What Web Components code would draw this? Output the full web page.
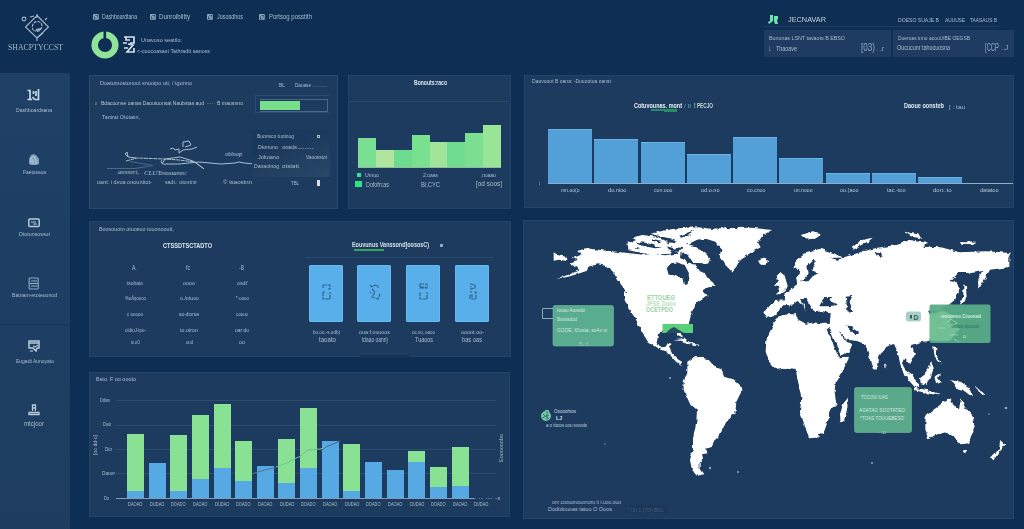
<!DOCTYPE html>
<html lang="en">
<head>
<meta charset="utf-8">
<title>Operations dashboard</title>
<style>
html,body{margin:0;height:529px;overflow:hidden;background:#0f2e53}
body{font-family:"Liberation Sans",Arial,sans-serif;color:#a9bed0}
</style>
</head>
<body>
<dash-app></dash-app>
<script>
/* Text squeezed to a given width, or spaced out when it is much shorter. */
class FitText extends HTMLElement{
  connectedCallback(){
    const w=+this.getAttribute('w'),s=+this.getAttribute('s')||6;
    this.attachShadow({mode:'open'}).innerHTML=`<style>
      :host{display:block;flex:none;width:${w}px;height:${s}px;font-size:${s}px;line-height:${s}px;white-space:nowrap}
      span{display:inline-block;transform-origin:0 50%;vertical-align:top}</style><span><slot></slot></span>`;
    const sp=this.shadowRoot.querySelector('span');
    const len=()=>{const r=sp.getBoundingClientRect();return Math.max(r.width,r.height)};
    const n=len(),c=this.textContent.length;
    if(!n) return;
    if(w/n>1.12&&c>1) sp.style.letterSpacing=(w/1.12-n)/c+'px';
    sp.style.transform=`scaleX(${w/len()})`;
  }
}
customElements.define('fit-text',FitText);

/* t: text item, b: box item. Both carry their left edge and width. */
const t=(text,x,w,s=6,c='#a9bfd1',bold=0,o='')=>({x,w,html:m=>`<fit-text w="${w}" s="${s}" style="margin-left:${m}px;color:${c};${bold?'font-weight:700;':''}${o}">${text}</fit-text>`});
const b=(x,w,h,css,inner='')=>({x,w,html:m=>`<div style="flex:none;box-sizing:border-box;margin-left:${m}px;width:${w}px;height:${h}px;${css}">${inner}</div>`});
const svg=(x,w,h,vb,inner)=>({x,w,html:m=>`<svg style="flex:none;display:block;margin-left:${m}px" width="${w}" height="${h}" viewBox="${vb}" fill="none">${inner}</svg>`});
/* Vertical stack of flex rows; each row is [centre, height, items]. */
const stack=(x0,y0,rows)=>{let y=y0;return rows.map(([c,h,items])=>{
  const top=c-h/2,mt=top-y;y=top+h;let x=x0;
  return `<div class="row" style="margin-top:${mt}px;height:${h}px">${items.map(i=>{const m=i.x-x;x=i.x+i.w;return i.html(m)}).join('')}</div>`}).join('')};
const ROW='.row{display:flex;align-items:center}';
const def=(name,css,html)=>customElements.define(name,class extends HTMLElement{
  constructor(){super();this.attachShadow({mode:'open'}).innerHTML=`<style>:host{display:flow-root;box-sizing:border-box}${ROW}${css}</style>${html}`}});
const PANEL=':host{background:#1d3b5f;box-shadow:inset 0 0 0 1px #22436a}';
const ic=(x,y)=>svg(x,6,6,'0 0 6 6','<path d="M.5 .5h4.8v4.8H.5zM1 3h4M3 1v4M1 1l4 4" stroke="#9db4c9" stroke-width=".9"/>');

def('dash-header',':host{height:73px;display:flex}.brand{width:89px;display:flow-root;flex:none}.mid{width:675px;flex:none;display:flow-root}.right{width:250px;display:flow-root}.cards{display:flex;gap:2px;margin-top:3.5px}.card{background:#1e3b61;height:27px;display:flow-root}',
`<div class="brand">${stack(0,0,[
 [27,28,[svg(20,32,28,'20 13 32 28','<g stroke="#9fb8cc" stroke-width="1.1"><path d="M37 15.5L48.5 27 37 38 25.5 27Z"/><path d="M33.5 30.5c-3-4 0-9 4-9 5 0 6 6 2 9-2 1.5-4 1-5 0" stroke-dasharray="3 1"/><circle cx="24" cy="19" r="1.9"/><path d="M37 14v4M37 38v4M45 20l2-2M30 17l4-1M43 33l-5 4"/><path d="M36 30l5-1" stroke-width="2"/></g>')]],
 [47,10,[t('SHACPTYCCST',8,55,9,'#a3b9cb',0,'font-family:Liberation Serif')]]])}</div>
<div class="mid">${stack(89,0,[
 [17,8,[ic(93),t('Dashboardtana',102,35,6.5),ic(150),t('Dunrolblitty',159,31,6.5),ic(207),t('Jososdhos',217,26,6.5),ic(259),t('Portsog posstith',269,43,6.5)]],
 [45,28,[svg(91,28,28,'0 0 28 28','<circle cx="14" cy="14" r="10.3" stroke="#91e399" stroke-width="6.5"/><path d="M12.5 0v8h2.6V0" fill="#0f2e53"/>'),
   svg(122,14,20,'0 0 14 20','<path d="M2 2h10v6H8M4 2v3h4M1 8h4M6 9l5 1-6 7h7v-4M2 13h4" stroke="#d3e1e8" stroke-width="1.7"/>'),
   b(137,75,22,'',stack(137,34,[[39.5,6,[t('Unavoso seattlo:',141,41,6)]],[50.5,6,[t('&lt;-cuocoasaxt Tathradtt aanoss',137,73,6)]]]))]]])}</div>
<div class="right">${stack(764,0,[
 [19.5,11,[svg(768,11,10,'0 0 11 10','<path d="M2 0h3v6l-4 3L0 7l2-1zM6 1h4v3L9 5l1 4H7L6 6z" fill="#6fe6ae"/>'),t('JECNAVAR',788,38,8,'#c1d1dd'),t('DOESO SUAJE B',898,41,6),t('AUUUSE',945,20,6),t('TAASAUS B',970,27,6)]],
 [26,1,[b(764,235,1,'background:#1c3c61')]]])}
 <div class="cards"><div class="card" style="width:127px">${stack(764,30,[
 [37.5,7,[t('Bununas LSNT tavaots B EBSO',769,76,6)]],
 [48,10,[t('L',769,3,7),t('Thaoave',776,21,7),t('[03)',861,14,10,'#90aac1'),t('. .r',877,7,7)]]])}</div>
 <div class="card" style="width:121px">${stack(893,30,[
 [37.5,7,[t('Dueruas tnno acouUIBE OEGSB',898,72,6)]],
 [48,10,[t('Oucucunr tahucuosna',897,53,6.5),t('[CCP',985,14,10,'#90aac1'),t('..J',1002,6,8)]]])}</div></div></div>`);

def('side-nav',':host{width:70px;height:456px;background:linear-gradient(#1f4166,#1d3c60)}',stack(0,73,[
 [95,14,[svg(27,13,12,'0 0 13 12','<path d="M.5 1.500H3V10M.5 10.500H5M6.500 2v3M5.500 8l2 2.500M11.500 0v10.500H7.500M9 2v5" stroke="#c6d8e3" stroke-width="1.700"/>')]],
 [109.5,6,[t('Dashboardsana',16,36,6)]],
 [159,13,[svg(28,12,13,'0 0 12 13','<path d="M1 11V6l2-4 3-1 3 2 2 3v5l-3 1H3z" fill="#829fb9"/><path d="M3 10V5l3-2 2 4v4M5 6v5" stroke="#b7cad8" stroke-width="1"/>')]],
 [171.5,6,[t('Faetoseoa',23,23,6)]],
 [222.5,10,[svg(28,12,10,'0 0 12 10','<rect x=".8" y="1" width="10.4" height="7.6" rx="1" stroke="#b5c9d8" stroke-width="1.5"/><path d="M3 4h5M5 6h4" stroke="#b5c9d8"/>')]],
 [234,6,[t('Dtotunsossot',19,31,6)]],
 [283,13,[svg(28,12,13,'0 0 12 13','<rect x="1.2" y="1" width="9" height="11" rx="1" stroke="#8aa8c0" stroke-width="1.2"/><path d="M3 4h6M2 6.5h8M3 9h6" stroke="#9ab3c8" stroke-width="1.2"/>')]],
 [295,6,[t('Batnam-etoteuonod',12,45,6)]],
 [325,2,[b(0,70,2,'border-top:1px solid #163253')]],
 [346,12,[svg(28,12,12,'0 0 12 12','<path d="M1 1h10v7H9l-1 3-3-3H1zM1 3h10" stroke="#b5c9d8" stroke-width="1.5"/><path d="M2 11h3M5 6l2 1 3-2" stroke="#d5e2e8"/>')]],
 [361,6,[t('Eugadt Aunoyato',16,38,6)]],
 [410,12,[svg(28,12,12,'0 0 12 12','<path d="M4.5 7V1h3v6M4.500 4h3M1 8.500h10v2H1z" stroke="#b5c9d8" stroke-width="1.3"/>')]],
 [423,7,[t('mtcjoor',24,20,7)]]]));

/* Status panel: progress, trend drawing and a small list. */
def('status-panel',PANEL+':host{width:249px;height:134px;box-shadow:inset 0 0 0 1px #294b70;display:flex}.l{width:164px;flex:none}.r{width:85px;flex:none}',
`<div class="l">${stack(89,75,[
 [83,6,[t('Doatumostonooi snuoipo oti, / tgonno',100,92,6)]],
 [103,6,[t('o',95,3,6),t('Bdacuonse oanas Daoutuonsat Naubstas aud',101,103,6,'#b6c8d6'),t('---',207,7,5,'#7390a9'),t('B maosnno',217,26,6,'#b6c8d6')]],
 [117,6,[t('Tantrat Ototasn,',102,38,6)]],
 [157,40,[svg(105,148,40,'105 137 148 40','<g stroke="#a6bfce" stroke-width="1"><path d="M126 161l11-3 28 1 14 1 16 2 8 6" stroke-dasharray="4 .6"/><path d="M128 157l-3-3 2-2 1 5 8 1"/><path d="M170 149l3-1 2 2 4-1v4l4-3 9-1 5-2M183 147v-5l6-1 2 4-6 2M162 164l3-5 15-2 13 4 11 8"/><path d="M162 160c-2 2 0 5 4 4l13 0 20-2 22 2 14-1 4-1 5 1 10 1"/><path d="M107 168.500h28l18-3-23-4" stroke="#49698a"/></g><g fill="#b3c6d3" font-size="7" font-style="italic" font-family="Liberation Serif"><text x="118" y="174" textLength="21" lengthAdjust="spacingAndGlyphs">anssert,</text><text x="144" y="174.500" textLength="43" lengthAdjust="spacingAndGlyphs">CLUTosuuamn:</text><text x="225" y="156" textLength="17" lengthAdjust="spacingAndGlyphs">oblnop</text></g>')]],
 [182,6,[t('oant: i dvua onounttot-',97,55,6),t('sadt.: otontmr',165,32,6),t('© tsaostnn',223,29,6)]]])}</div>
<div class="r">${stack(253,75,[
 [85,6,[t('BL',279,6,6),t('Daoase',295,16,6),b(312,15,3,'border-bottom:1px solid #31506f')]],
 [104,18,[b(254.500,74,18,'border:1.5px solid #2b4c70;border-right:0;padding:3px 0 0 4px','<div style="box-sizing:border-box;width:68px;height:13px;border:1.5px solid #476a8b;border-left:0;display:flow-root"><div style="width:40px;height:9.5px;background:#79df8b;margin-top:.5px"></div></div>')]],
 [153,48,[b(252,78,47,'background:linear-gradient(160deg,#1a385b 30%,#294768);',stack(252,129,[
   [136,6,[t('Buonsco tuotnug',257,37,5.500),b(317,3,3,'border:1px solid #a9bfd1')]],[147.500,6,[t('Dtonuno',258,20,5.500),t('ooads',282,15,5.500),t('-------',298,16,5)]],[157,6,[t('Joltoano',258,21,5.500),t('Vaoosstot',306,21,5.500)]],[166,6,[t('Danaotnog',254,25,5.500),t('otstatt',282,17,5.500)]]]))]],
 [183,7,[t('TBL',291,8,6),b(317,3,6,'background:#d3e0e8')]]])}</div>`);

const vbar=(h,c,w)=>`<i style="height:${h}px;background:${c};width:${w}px"></i>`;
def('step-panel',PANEL+':host{width:163px;height:134px}.bars{display:flex;align-items:flex-end;margin:0 0 0 10px;height:66px;width:143px;border-bottom:1px solid #93b8a6;box-sizing:border-box}i{display:block}',
`${stack(348,75,[[83.500,7,[t('Bonouts:raco',414,33,6.500,'#dce6ec',1)]],[101,1,[b(350,159,1,'background:#284769')]]])}
<div class="bars">${[[29,'#7adf92'],[17,'#b0e5a0'],[17,'#6cdb8f'],[32,'#79e090'],[25,'#a0e49a'],[25,'#70dc90'],[33.500,'#7bdf91'],[42,'#9ae498']].map(a=>vbar(a[0],a[1],17.88)).join('')}</div>
${stack(348,167.500,[
 [174.500,6,[b(356.500,4,4,'background:#35dfa0'),t('Umuo',365,14,6),t('2:oaas',423,15,6),t('.noaao',481,15,6)]],
 [184,7,[b(355,7,6.500,'background:#2ee283'),t('Dofofn:as',366,23,7),t('Bi,CYC',421,19,7),t('[od soos]',476,26,6.500)]]])}`);

def('volume-panel',PANEL+':host{width:490px;height:133px}.bars{display:flex;align-items:flex-end;gap:2.3px;margin:0 0 0 24px;height:56px}.bars i{display:block;width:44px;background:#539fd8;box-shadow:inset 0 1px #6bb2e5}',
`${stack(524,75,[[82,5.500,[t('Dauvuoot B oana: -Duuootua oanst',532,79,5.500)]],
 [106.500,9,[t('Cotuvounas. mont',634,48,6.500,'#eaf1f4',1),t('/ II',684,7,5.500,'#6ba79c'),t('! PECJO',694,19,6.500,'#c2dbdb',1),t('Daoue oonsteb',904,40,6.500,'#e3ebef',1),t('[ : tau',949,16,6)]],
 [110,3,[b(651,13,2,'background:#288768'),b(664,13,3,'background:#249062')]]])}
<div class="bars" style="margin-top:15.500px">${[54,44,41,29.500,46,25.500,10,10,6].map(h=>`<i style="height:${h}px"></i>`).join('')}</div>
${stack(524,183,[[183.500,1,[t('o',539,2,5),b(548,465,1,'background:#8caec8')]],
 [189.500,6,['mn.oo(o','do.nioo','con.uoo','od:o.no','co.cnoo','un.nooo','oo.(aoo','tac.-too','don:.to','datatoo'].map((s,i)=>t(s,561+i*46.500,18.500,6,'#b4c8d6'))]])}`);

const card=(x,p)=>b(x,34,57,'background:#59afea;border-radius:2px;box-shadow:inset 0 0 0 1px #69b9ef;padding:18px 10px',`<svg width="14" height="22" viewBox="0 0 14 22" fill="none" style="display:block"><path d="${p}" stroke="#2f6590" stroke-width="1.200" stroke-dasharray="4 .7"/></svg>`);
const C=[134,188,241];
def('register-panel',PANEL+':host{width:422px;height:136px;display:flex}.l{width:211px;flex:none}.r{flex:none;width:211px}',
`<div class="l">${stack(89,221,[
 [230,6,[t('Boosouotn otuosuo tuuonooutt,',99,75,5.500)]],
 [246,7,[t('CTSSDTSCTADTO',163,49,6.500,'#dce6ec',1)]],
 [267.500,7,[t('A.',131.500,5,7),t('fc',185.500,5,7),t('-B',239,5,7)]],
 ...[[282.500,[['tsobato',16],['oooo',12],["osdt'",11]]],[298,[['%oÅqoooo',21],['o./otuoo',19],['*-oooo',13]]],[314,[['c ooooo',16],['ao-diorua',20],['ooouo',12]]],[330,[['oldtoJ-tpo-',21],['to.otroo',18],['oar:do',14]]],[342,[['to.oO',9],['oud',7],['oo',6]]]].map(([y,a])=>[y,6,a.map(([s,w],i)=>t(s,C[i]-w/2+1,w,6))])])}</div>
<div class="r">${stack(300,221,[
 [245,7,[t('Eouvunus Vanssond]oososC)',352,77,6.500,'#d5e1e8',1),b(439.500,3,3,'background:#8fa9bf')]],
 [250,2,[b(354,30,2,'background:#3aa45e')]],
 [257,1,[b(305,188,1,'background:#2a4a6d')]],
 [293,58,[card(308.500,'M4 2h7v4H9M4 2v3M4 9v7h7V9M4 9h2'),card(357,'M3 2l2 2 3-2 3 1v2M5 6l3 3-3 5 6 2 2-5M4 9l-1 1'),card(406,'M4 1h7v4H4zM4 4h6M4 9v7h7V9'),card(454.500,'M5 1l5 1v3l-4 1V3M6 8v2M5 16v-4h2v4h4V9H9')]],
 [331.500,6,[t('bo.oo.-s.odb)',312.500,27,6),t('oua:f:ouuoos',358.500,31,6),t('oc.vo, oaoo',412,23,6),t('oooot.oo-',461,23,6)]],
 [340,6,[t('taoato',319,17,6.500),t('tdaao oann)',361.500,26,6.500),t('Tuaoos',415,18,6.500),t('bas oas',461.500,20,6.500)]],
 [355.500,2,[b(360,50,2,'background:#173354')]]])}</div>`);

/* Stacked bars: [total height, blue part]. */
const SB=[[64,7],[35,35],[63,7],[83.500,19],[94,30],[57,17],[32,32],[59.500,15.500],[90.500,30],[57,57],[54,7],[36,36],[28.500,28.500],[47,36],[31,11],[51.500,12]];
const grid=[['Ddtos',400.500,100,10],['Datt',425,103,8],['Dto',449.500,105,7],['Daoor',473.500,102,13],['Do',498.500,104,5]];
def('stack-panel',PANEL+':host{width:421px;height:145px}.plot{display:flow-root;position:relative;height:107px;margin-top:12px}.bars{position:absolute;left:38px;bottom:4px;display:flex;align-items:flex-end;gap:4.650px}.bar{width:17px;display:flex;flex-direction:column}.bar i{display:block;background:#89e293;flex:1}.bar u{display:block;background:#57a9e3;flex:none}svg{position:absolute;left:0;top:0}.v{position:absolute;transform:rotate(-90deg);transform-origin:0 0}',
`${stack(89,372,[[380,6,[t('Bsto. F oo  oouto',96,40,5.500)]]])}
<div class="plot">${stack(89,395,grid.map(([s,y,x,w])=>[y,5,[t(s,x,w,5.500),b(116,y>490?358:380,1,y>490?'background:#7f9fb9':'background:#2c4d70',''),...(y>490?[t('- -- --- -s',474,27,5)]:[])]]))}
<div class="bars">${SB.map(([h,u])=>`<div class="bar" style="height:${h}px">${h>u?'<i></i>':''}<u style="height:${u}px"></u></div>`).join('')}</div>
<svg width="421" height="107" viewBox="89 395 421 107" fill="none"><path d="M253 473.500l13-4 10-2" stroke="#457897"/><path d="M276 467l12-4.500 7-4 5-2" stroke="#68c993"/><path d="M300 456l8-6 12-1 6-2" stroke="#6fbd93"/><path d="M321 451l5-4 14-6" stroke="#3c6c99"/></svg>
<fit-text class="v" w="20" s="5.500" style="left:4px;top:60px">[oo dd-o]</fit-text><fit-text class="v" w="28" s="5.500" style="left:410px;top:67px">Eoooooobo</fit-text></div>
${stack(89,502,[[504.700,6,Array.from({length:17},(_,i)=>t(['DAOAO','DUDAO','DOADO'][i%3],128.200+i*21.650,14.500,5.500))]])}`);

const tx=(x,y,w,s,str,c='#d5eadf',bold='')=>`<text x="${x}" y="${y}" textLength="${w}" lengthAdjust="spacingAndGlyphs" font-size="${s}" fill="${c}" ${bold?'font-weight="700"':''}>${str}</text>`;
def('world-map',PANEL+':host{width:491px;height:299px}svg{display:block;font-family:"Liberation Sans",sans-serif}',
`<svg width="491" height="299" viewBox="523 219 491 299">
<defs><filter id="coast" x="-2%" y="-2%" width="104%" height="104%" color-interpolation-filters="sRGB"><feTurbulence type="fractalNoise" baseFrequency=".2" numOctaves="2" seed="4"/><feDisplacementMap in="SourceGraphic" scale="4" xChannelSelector="R" yChannelSelector="G"/></filter></defs>
<g filter="url(#coast)" fill="#fff">
<g transform="translate(518 214) scale(.33333)">
<path d="M107 112l14 9 27 5v12l-25-4-16 3z"/>
<path d="M163 130l25-10-10-12 27-8 35 4 35 4 55 6 45 5 35-2 30 4 35-5 25 8 10 18 14 5 16 3 20 21 10 18 15 14 8 10-32 7-8 12 16 8-15 13-16 10-12 18-8 20-5 26-15 3-6 22 2 18-9-2-10-24-24-4-28 16-4 28 8 13 16-2 8-14 10 2-8 14 10 20 15 15 14 8-4 12-18-16-22-26-30-10-27-18-14-22-13-26-12-24-22-32-12-28v-30l-15-18-18-32-20-17-25-5-30 7-3 12-22 8-34 10-38 6 43-13 28-13-8-8-20-14 20-8-15-10z"/>
<path d="M326 84l34-10 40 4 40 2 28 22-10 14-60 3-40-8-30-6zM340 68l34-8 46 6 32 16-40 6-50-6zM398 56l44-10 38-6 60-3 40 4-18 14-26 20-20 10-30-2-24-12-30-6zM445 88l24-12 30 8 32 10 34 24 12 14-7 14-24-2-22 0-12-16-20-12-30-10zM476 106l20 0 10 26-16 8z"/>
<path d="M540 46l60-6 100-2 62 7-28 16-14 22 8 14-30 16-33 22-10 20-13 15-20-20-17-26 5-22-18-22-26-8-40 2 20-18zM718 138l22-7 14 8-18 11-14-4zM466 376l34-5 24 16-10 1-22-10zM522 386l22 3-2 5-18-2z"/>
<path d="M508 440l22-15 40 7 15 18 25 12 8 23 32 10 18 17 2 18-15 30-3 35-27 25-15 30-12 18-13 12-3 15-17 7 3 13-16 3 3 12-10 15v17l11 16-16 4-18-17-6-30 9-35v-30l10-50 2-35-22-20-18-40v-25l11-30z"/>
<path d="M366 320l8 4 20 38-4 4-18-26z"/>
<g fill="#1d3b5f"><path d="M446 160l12-15 22-3 20 8 13 25-4 33-8 2-5-20-25-8-20-7zM352 80l36 4 40 14-18 2-36-8zM400 72l34 6-4 5-30-6zM440 70l40 10-12 5-24-6zM484 62l44-16-12 14-24 8zM445 94l40 10-4 7-32-8zM488 108l22 12 16 24-14 4-12-16-14-6zM530 146l22 8 8 18-22-8zM552 224l32 0-6 12-22-3zM474 96l20 4-4 5-18-4zM346 98l20 4-8 3zM290 180l22 34 16 20-4 0-20-20z"/></g>
</g>
<g transform="translate(764 214) scale(.33333)">
<path d="M40 305l30-7h28l7 17 30 10 15-3 40 6 5 17 20 55 13 30 27-2-15 32-25 40-3 30 5 40-22 20v20l-15 40-25 18-20 2-10-30-17-50 4-40-12-60-5-28-25-4-32 7-23-25-10-30 3-40 22-45z"/>
<path d="M228 600l7-30 17-22-2 32-10 40-10 2z"/>
<path d="M33 258l32-2-5-16 22-18 18-15-4-22 8-8 2-14-18-3 12-25 30-25 40-9 40 14 25 13 35-10 30-10 40-10 42-6 36-12 14-6 56 10-10 12 50 0 60 16 80-3 68 5v42l-58 8-15 27-18 30-5-28 15-25-30 6-42 0-24 24 20 4 6 26-12 26-22 18-16 6 6 20-10 6-12-16-24-4 14 30 12 30-20 32-38 8-22 6 12 28-14 32-18-20-6 12 16 44-10-4-12-34-8-36-12-28-22 12-24 26-5 42-8-2-16-42-10-32-25-10-32-4-22-26 12 24 28 16-6 18-52 34-42-80 8-22 3-26-34 4-20-12-12-30-18-10-8 2 20 26-6 16-16-28-16-14-20 18-12 16-26 6-10-14z"/>
<path d="M30 212l12-12-4-16 10-14 14 12 10 34-14 16-18 4 6-20zM110 60l34-8 30 6-22 14-30-2zM264 98l26-22 36-8-14 12-26 10-8 16zM418 50l44 8 14 12-30-4zM588 78l48 2-6 8-38-2zM485 600l30-20 25-20 20-10 8 20 17 10 7-30 10 25 23 25 7 35-17 50-25 3-20-23-25-13-30 8-23 10-8-30zM599 704l12 2-4 12-10-4zM708 675l16 14-22 28-16 20-6-8 26-28zM468 490l20-16 14-36 4 22-8 24-10 26-18-6zM418 458l26 20 22 36-12 4-20-22zM450 518l34 6 42 12-2 5-42-8-32-8zM558 496l32 4 24 16 14 32-22-16-20-8zM512 486l20-12-10 14 8 12-14 8zM508 394l12 4-2 22 12 26-12-10-8-20zM360 440l8 14-6 8zM598 205l8 12 2 30-10 20-12 4 12-24zM632 512l30 26-6 2-24-22z"/>
<g fill="#1d3b5f"><path d="M64 292l14-20 22-14 18 12 8 20-4-20-16-20 18-2 18 28 10 16 20-4 28 8-3 28-46-2-26 4-24-14-2-14zM166 274l14-28 24 0-6 12 24 12-26 4zM245 245l20-2-8 18 10 28-16 4zM134 172l-4-18 20-20 6 6-14 26 22 8-18 10-12 14-26 4zM188 340l8-2 34 84-6 6zM244 332l10 0 30 20-14 6zM196 128l40 0-16 6zM330 110l24 6-2 10-14-6z"/></g>
</g></g>
<rect x="662.500" y="323" width="30.500" height="9" fill="#59cf7b"/><path d="M666 332l4-4 4-2 5 3 5 3z" fill="#244c62"/>
<g>${tx(647,299,28,7,'ETTOUEG','#9ad4a6',1)}${tx(646,305,30,7,'JFSE Duoo','#b7e2bd',1)}${tx(646,311,27,7,'OCETPDO','#98d1a3',1)}</g>
<path d="M553 307.500h-10.500v10h10.500" fill="none" stroke="#8daabd"/>
<rect x="553" y="304.500" width="60.500" height="40.500" rx="2" fill="#5aac90" stroke="#6fbc9b" stroke-width=".6"/>
${tx(557,311,28,5.500,'Iouau Auosdo')}${tx(557,319.500,20,5.500,'Booosdod')}${tx(557,331,50,6,'GOOE, IOosta: soAv oi')}${tx(579,345,9,6,'5.:f','#9bd5b4')}
<rect x="906" y="310.500" width="15" height="10" rx="2.500" fill="#a9cfc6"/><rect x="910" y="314" width="2" height="3.500" fill="#315f68"/>${tx(913.500,318.500,5,7,'D','#315f68',1)}
<rect x="929.500" y="303.500" width="61" height="38.500" rx="2" fill="#57ac86" fill-opacity=".95"/>
<path d="M930 313l14-3 8 4-2 8 10 6 -4 4-6 8h-14l-6-1z" fill="#7bc79b" opacity=".75"/><path d="M946 322l5-4 6 4-8 4M938 327h7M950 334h8M954 338l5 3" stroke="#b5e0c2" fill="none" opacity=".6"/>
${tx(940,317,41,6,'-ooounso.Cruonad','#d4eedf',1)}${tx(950,326.500,29,5.500,'-oouoo-doouod','#2e7064')}${tx(963,337,3,6,'o')}
<rect x="854.500" y="386.500" width="57" height="45" rx="2" fill="#5aa98b" stroke="#6cba98" stroke-width=".6"/>
${tx(861,397.500,27,5.500,'TOOJNI IUAS')}${tx(859,410.500,46,6,'AOATAO SOOTATEO')}${tx(860,419,44,6,'*TOAS TOUUEBESO')}${tx(878,432.500,8,5,'-:o','#9bd5b4')}
<g fill="#76c8a6"><circle cx="546" cy="415" r="5"/><circle cx="547" cy="411" r="2.300"/></g><path d="M543 413l6 5M547 410v9M542 417l7-3" stroke="#2b7871" fill="none"/>
${tx(554,412,22,5.500,'Ooooohtos','#c6dbe0')}${tx(556,419,6,6,'LJ','#d6e2e8',1)}${tx(546,425.500,41,5.500,'a  o tttoos uou svvods','#bdd0da')}
${tx(552,502.500,69,5.500,'onr coouonouonoru it t.uou.ouo','#a9bfd1')}${tx(548,509.500,64,6,'Dodtdouoas  tatoo O  Ooos','#a9bfd1')}
<rect x="629" y="504" width="39" height="8" fill="#1a3658"/>${tx(629,510.500,35,6,'"(3) 1 (7O) BOL','#45637f')}
<g fill="#8da9bd"><circle cx="670" cy="377" r="1"/><circle cx="710" cy="467" r="1.200"/><circle cx="738" cy="471" r="1"/><circle cx="605" cy="443" r=".7"/><circle cx="872" cy="462" r="1"/><circle cx="1006" cy="407" r="1.300"/><circle cx="989" cy="413" r=".8"/></g>
</svg>`);

def('dash-app',`:host{width:1024px;height:529px;background:#0f2e53}
main{display:flex}.left{width:422px;margin:2px 12px 0 19px;display:flex;flex-direction:column}.top{display:flex;gap:10px}.rightc{width:491px;margin-top:2px}register-panel{margin-top:12px}stack-panel{margin-top:15px}volume-panel{margin-left:1px}world-map{margin-top:11.500px}`,
`<dash-header></dash-header><main><side-nav></side-nav><div class="left"><div class="top"><status-panel></status-panel><step-panel></step-panel></div><register-panel></register-panel><stack-panel></stack-panel></div><div class="rightc"><volume-panel></volume-panel><world-map></world-map></div></main>`);
</script>
</body>
</html>
